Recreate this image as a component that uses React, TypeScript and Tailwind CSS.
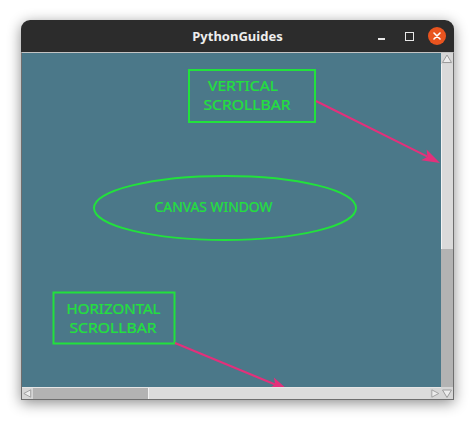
import React from "react";

const GREEN = "#22e13c";
const PINK = "#e3307b";

function ArrowBtn({ dir }: { dir: "up" | "down" | "left" | "right" }) {
  const pts: Record<string, string> = {
    up: "6,2 10.5,9.5 1.5,9.5",
    down: "1.5,2 10.5,2 6,9.5",
    left: "2,5.5 9.5,1.5 9.5,9.5",
    right: "2,1.5 9.5,5.5 2,9.5",
  };
  return (
    <svg width="12" height="11" viewBox="0 0 12 11" className="block">
      <polygon points={pts[dir]} fill="#ececec" stroke="#9c9c9c" strokeWidth="1" />
    </svg>
  );
}

function CanvasDrawing() {
  return (
    <svg width="419" height="334" viewBox="0 0 419 334" className="block">
      <rect x="167" y="17" width="126" height="52" fill="none" stroke={GREEN} strokeWidth="2" />
      <g
        fill={GREEN}
        stroke={GREEN}
        strokeWidth="0.2"
        fontFamily="'Noto Sans', 'Open Sans', sans-serif"
        textAnchor="middle"
        fontSize="13.5"
        lengthAdjust="spacingAndGlyphs"
      >
        <text x="221" y="37.5" textLength="70" lengthAdjust="spacingAndGlyphs">VERTICAL</text>
        <text x="225" y="56.5" textLength="87" lengthAdjust="spacingAndGlyphs">SCROLLBAR</text>
        <text x="191.5" y="159" fontSize="14" textLength="118" lengthAdjust="spacingAndGlyphs">CANVAS WINDOW</text>
        <text x="91.5" y="260.5" textLength="94" lengthAdjust="spacingAndGlyphs">HORIZONTAL</text>
        <text x="91" y="279.5" textLength="87" lengthAdjust="spacingAndGlyphs">SCROLLBAR</text>
      </g>
      <ellipse cx="203" cy="155" rx="131" ry="32" fill="none" stroke={GREEN} strokeWidth="2" />
      <rect x="31.5" y="239.5" width="121" height="51" fill="none" stroke={GREEN} strokeWidth="2" />

      <line x1="294" y1="48" x2="405.5" y2="103.7" stroke={PINK} strokeWidth="2" />
      <polygon points="418,110 399.2,107.3 405.5,103.7 404.6,96.5" fill={PINK} />

      <line x1="153" y1="290" x2="253.1" y2="331.5" stroke={PINK} strokeWidth="2" />
      <polygon points="266,337 247.1,335.4 253.1,331.5 251.9,324.4" fill={PINK} />
    </svg>
  );
}

export default function App() {
  return (
    <div className="w-[474px] h-[421px] bg-white pt-[20px] pl-[21px]">
      <div className="w-[433px] flex flex-col rounded-t-[9px] shadow-[0_3px_14px_rgba(0,0,0,0.45)]">
        {/* title bar */}
        <div className="h-[32px] grid grid-cols-[1fr_auto_1fr] items-center bg-[#2c2c2c] rounded-t-[9px]">
          <div />
          <span className="text-[13px] font-bold text-[#eeeeee] leading-none font-['Noto_Sans',sans-serif]">
            PythonGuides
          </span>
          <div className="flex items-center justify-end pr-[8px]">
            <div className="w-[7px] h-[1.5px] mt-[6px] bg-[#e8e8e8]" />
            <div className="ml-[20px] w-[9px] h-[9px] border-[1.5px] border-[#e8e8e8]" />
            <div className="ml-[14px] w-[18px] h-[18px] rounded-full bg-[#e9541f] flex items-center justify-center">
              <svg width="8" height="8" viewBox="0 0 8 8">
                <path d="M1 1 L7 7 M7 1 L1 7" stroke="#ffffff" strokeWidth="1.6" strokeLinecap="round" />
              </svg>
            </div>
          </div>
        </div>

        {/* body */}
        <div className="flex border-x border-b border-[#6e6e6e] border-t border-t-[#c4c4c4] bg-[#d9d9d9]">
          <div className="w-[419px] flex flex-col">
            <div className="h-[334px] bg-[#4b7889] overflow-hidden">
              <CanvasDrawing />
            </div>
            <div className="h-[12px] flex border-t border-[#e6e6e6]">
              <div className="w-[11px] bg-[#d6d6d6] flex items-center">
                <ArrowBtn dir="left" />
              </div>
              <div className="w-[115px] bg-[#b3b3b3]" />
              <div className="w-[282px] bg-[#dcdcdc] border-l border-[#f2f2f2]" />
              <div className="w-[11px] bg-[#d6d6d6] flex items-center">
                <ArrowBtn dir="right" />
              </div>
            </div>
          </div>
          <div className="w-[12px] flex flex-col">
            <div className="h-[11px] bg-[#d6d6d6]">
              <ArrowBtn dir="up" />
            </div>
            <div className="h-[185px] bg-[#dadada] border-l border-[#f2f2f2]" />
            <div className="flex-1 bg-[#b3b3b3]" />
            <div className="h-[12px] bg-[#d6d6d6] flex items-center">
              <ArrowBtn dir="down" />
            </div>
          </div>
        </div>
      </div>
    </div>
  );
}
